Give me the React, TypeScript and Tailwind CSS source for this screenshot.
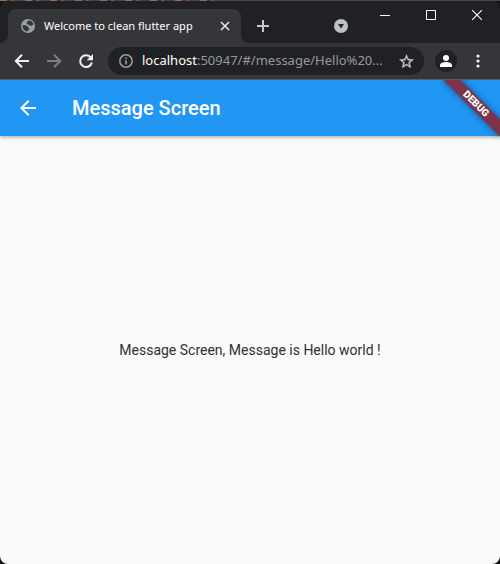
import type { ReactNode } from "react";

function ToolButton({ label, className, children }: { label: string; className: string; children: ReactNode }) {
  return (
    <button aria-label={label} className={`flex shrink-0 items-center justify-center ${className}`}>
      {children}
    </button>
  );
}

function TitleBar() {
  return (
    <header className="flex h-[42px] rounded-t-lg bg-[#202124]">
      <svg viewBox="0 0 8 8" className="size-2 shrink-0 self-end" fill="#35363a">
        <path d="M8 0v8H0a8 8 0 0 0 8-8z" />
      </svg>
      <div className="mt-2 flex h-[34px] w-[233px] shrink-0 items-center rounded-t-lg bg-[#35363a] pr-2 pl-3 text-white">
        <svg viewBox="0 0 16 16" className="size-4 shrink-0">
          <circle cx="8" cy="8" r="7" fill="#9aa0a6" />
          <path
            d="M8.800 2.300C7.500 3.300 6.500 4 6.800 5.600c.3 1.200 2 1 2.700 1.700.5.600 1.600.700 2.300.200l1.700-1.100A5.600 5.600 0 0 0 8.800 2.300zM2.400 7.300c1.600-.200 3.900-.100 5.100 1 .6.700.400 1.500 1.300 1.900 1 .500.600 1.500-.200 1.700-1 .300-.800 1-1.100 1.700A5.700 5.700 0 0 1 2.400 7.300z"
            fill="#35363a"
          />
        </svg>
        <span className="ml-2 flex-1 truncate text-[11px]">Welcome to clean flutter app</span>
        <ToolButton label="Close tab" className="size-4">
          <svg viewBox="0 0 16 16" className="size-4" stroke="#e8eaed" strokeWidth="1.6">
            <path d="m4 4 8 8M12 4l-8 8" />
          </svg>
        </ToolButton>
      </div>
      <svg viewBox="0 0 8 8" className="size-2 shrink-0 self-end" fill="#35363a">
        <path d="M0 0v8h8a8 8 0 0 1-8-8z" />
      </svg>
      <ToolButton label="New tab" className="mt-2 h-[34px] w-7">
        <svg viewBox="0 0 14 14" className="size-[14px]" stroke="#c4c6c9" strokeWidth="2">
          <path d="M7 1v12M1 7h12" />
        </svg>
      </ToolButton>
      <div className="flex-1" />
      <ToolButton label="Search tabs" className="mt-2 h-[34px] w-7">
        <svg viewBox="0 0 14 14" className="size-[14px]">
          <circle cx="7" cy="7" r="7" fill="#bdc1c6" />
          <path d="M4 5h6L7 9.500z" fill="#202124" />
        </svg>
      </ToolButton>
      <div className="ml-[7px] flex h-7 text-white">
        <ToolButton label="Minimize" className="w-[46px]">
          <svg viewBox="0 0 10 10" className="size-[10px]" fill="currentColor">
            <path d="M0 5h10v1H0z" />
          </svg>
        </ToolButton>
        <ToolButton label="Maximize" className="w-[46px]">
          <svg viewBox="0 0 10 10" className="size-[10px]" fill="none" stroke="currentColor">
            <path d="M.5.5h9v9h-9z" />
          </svg>
        </ToolButton>
        <ToolButton label="Close" className="w-[46px]">
          <svg viewBox="0 0 10 10" className="size-[10px]" stroke="currentColor" strokeWidth="1.1">
            <path d="m0 0 10 10M10 0 0 10" />
          </svg>
        </ToolButton>
      </div>
    </header>
  );
}

function Toolbar() {
  return (
    <nav className="flex h-[37px] items-center border-b border-[#5a5b5e] bg-[#35363a] pl-[6px]">
      <ToolButton label="Back" className="size-8">
        <svg viewBox="0 0 16 16" className="size-4" fill="none" stroke="#f1f3f4" strokeWidth="2">
          <path d="M15 8H2.500M8 1.800 1.800 8 8 14.200" />
        </svg>
      </ToolButton>
      <ToolButton label="Forward" className="size-8">
        <svg viewBox="0 0 16 16" className="size-4" fill="none" stroke="#7d7e81" strokeWidth="2">
          <path d="M1 8h12.500M8 1.800 14.200 8 8 14.200" />
        </svg>
      </ToolButton>
      <ToolButton label="Reload" className="size-8">
        <svg viewBox="0 0 16 16" className="size-4">
          <path d="M12.800 4.600A5.900 5.900 0 1 0 13.800 9.500" fill="none" stroke="#f1f3f4" strokeWidth="2" />
          <path d="M15 1v6.300H8.700z" fill="#f1f3f4" />
        </svg>
      </ToolButton>
      <div className="ml-[6px] flex h-7 min-w-0 flex-1 items-center rounded-full bg-[#202124] px-[10px] text-[13px]">
        <svg viewBox="0 0 16 16" className="size-4 shrink-0">
          <circle cx="8" cy="8" r="6.200" fill="none" stroke="#9aa0a6" strokeWidth="1.500" />
          <path d="M7.200 4.500h1.600v1.600H7.200zM7.200 7.200h1.600v4.300H7.200z" fill="#9aa0a6" />
        </svg>
        <span className="ml-2 min-w-0 flex-1 whitespace-nowrap text-[#969a9f]">
          <span className="text-white">localhost</span>:50947/#/message/Hello%20...
        </span>
        <ToolButton label="Bookmark this tab" className="size-4">
          <svg viewBox="0 0 24 24" className="size-[17px] shrink-0" fill="#c4c6c9">
            <path d="m22 9.240-7.190-.62L12 2 9.190 8.630 2 9.240l5.460 4.730L5.820 21 12 17.270 18.180 21l-1.630-7.030zM12 15.400l-3.760 2.270 1-4.280-3.320-2.880 4.380-.38L12 6.100l1.710 4.040 4.380.38-3.320 2.880 1 4.280z" stroke="#c4c6c9" strokeWidth="0.5" />
          </svg>
        </ToolButton>
      </div>
      <ToolButton label="Profile" className="ml-[11px] size-[22px] rounded-full bg-[#202124]">
        <svg viewBox="0 0 12 12" className="size-3" fill="#fff">
          <circle cx="6" cy="3" r="3" />
          <path d="M0 12V10.500C0 8 3 7 6 7s6 1 6 3.500V12z" />
        </svg>
      </ToolButton>
      <ToolButton label="Menu" className="mr-2 ml-[7px] size-7">
        <svg viewBox="0 0 4 14" className="h-[14px] w-1" fill="#f1f3f4">
          <circle cx="2" cy="2" r="1.600" />
          <circle cx="2" cy="7" r="1.600" />
          <circle cx="2" cy="12" r="1.600" />
        </svg>
      </ToolButton>
    </nav>
  );
}

function AppBar() {
  return (
    <header className="relative flex h-14 items-center bg-[#2196f3] px-4 font-[Roboto,sans-serif] text-white shadow-[0_1px_4px_rgba(0,0,0,0.35)]">
      <ToolButton label="Go back" className="size-6">
        <svg viewBox="0 0 24 24" className="size-6" fill="currentColor">
          <path d="M20 11H7.830l5.590-5.590L12 4l-8 8 8 8 1.410-1.410L7.830 13H20z" />
        </svg>
      </ToolButton>
      <h1 className="ml-8 text-xl font-medium">Message Screen</h1>
      <div className="absolute top-0 right-0 size-20 overflow-hidden">
        <div className="absolute top-[18px] -right-4 h-3 w-20 rotate-45 bg-[#7d3349] text-center text-[10px] leading-3 font-black shadow-[0_0_6px_rgba(0,0,0,0.5)]">
          DEBUG
        </div>
      </div>
    </header>
  );
}

export default function App() {
  return (
    <div className="flex min-h-screen flex-col bg-[#161616] font-['Noto_Sans',sans-serif]">
      <div className="h-px bg-[#484848]">
        <div className="h-px w-[225px] bg-[repeating-linear-gradient(90deg,#9c6a55_0_7px,#3a3a3a_7px_11px,#8a5a48_11px_14px,#404846_14px_25px)]" />
      </div>
      <TitleBar />
      <Toolbar />
      <div className="flex flex-1 flex-col overflow-hidden rounded-b-lg bg-[#fafafa]">
        <AppBar />
        <main className="flex flex-1 items-center justify-center font-[Roboto,sans-serif] text-sm text-[#303030]">
          <p>Message Screen, Message is Hello world !</p>
        </main>
      </div>
    </div>
  );
}
